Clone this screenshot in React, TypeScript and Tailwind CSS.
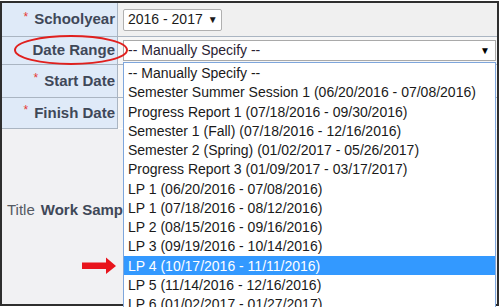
import React from "react";

const options = [
  "-- Manually Specify --",
  "Semester Summer Session 1 (06/20/2016 - 07/08/2016)",
  "Progress Report 1 (07/18/2016 - 09/30/2016)",
  "Semester 1 (Fall) (07/18/2016 - 12/16/2016)",
  "Semester 2 (Spring) (01/02/2017 - 05/26/2017)",
  "Progress Report 3 (01/09/2017 - 03/17/2017)",
  "LP 1 (06/20/2016 - 07/08/2016)",
  "LP 1 (07/18/2016 - 08/12/2016)",
  "LP 2 (08/15/2016 - 09/16/2016)",
  "LP 3 (09/19/2016 - 10/14/2016)",
  "LP 4 (10/17/2016 - 11/11/2016)",
  "LP 5 (11/14/2016 - 12/16/2016)",
  "LP 6 (01/02/2017 - 01/27/2017)",
];

const Label = ({ text, required, h }: { text: string; required?: boolean; h: string }) => (
  <div className={`${h} flex items-center justify-end pr-[2px] bg-[#dfeaf8] border-r border-b border-[#aab5c2] text-[15px] font-bold text-[#3f4858]`}>
    {required && <span className="text-[#e53935] text-[12px] font-normal mr-[6px] -mt-[6px]">*</span>}
    {text}
  </div>
);

const App = () => {
  return (
    <div className="relative w-[500px] h-[307px] bg-white overflow-hidden font-['Liberation_Sans',Arial,sans-serif]">
      <div className="mt-[1px] w-[499px] h-[305px] border-2 border-[#2e2e2e] bg-[#f1f1f3] flex flex-col">
        <div className="grid grid-cols-[116px_1fr]">
          <Label text="Schoolyear" required h="h-[34px]" />
          <div className="h-[34px] bg-[#f0f0f0] border-b border-[#aab5c2] flex items-center pl-[5px]">
            <div className="w-[99px] h-[22px] bg-white border border-[#b0b0b0] rounded-[2px] flex items-center pl-[4px] text-[14px] text-[#1a1a1a]">
              2016 - 2017
              <span className="text-[10px] ml-[5px]">▼</span>
            </div>
          </div>

          <Label text="Date Range" h="h-[28px]" />
          <div className="h-[28px] bg-[#f6f6f6] border-b border-[#aab5c2] flex items-center pl-[5px]">
            <div className="w-[373px] h-[21px] bg-white border border-[#a9a9a9] flex items-center justify-between pl-[4px] pr-[5px] text-[14px] text-[#2a2233]">
              -- Manually Specify --
              <span className="text-[10px] text-black">▼</span>
            </div>
          </div>

          <Label text="Start Date" required h="h-[33px]" />
          <div className="h-[33px] bg-[#f6f6f6] border-b border-[#aab5c2]" />

          <Label text="Finish Date" required h="h-[31px]" />
          <div className="h-[31px] bg-[#f6f6f6] border-b border-white" />
        </div>

        <div className="flex-1 flex items-center pl-[5px] pb-[12px] text-[15px] text-[#555a63]">
          <span>Title</span>
          <span className="ml-[6px] font-bold text-[#3f4858]">Work Sample</span>
        </div>
      </div>

      {/* open dropdown list */}
      <div className="absolute left-[123px] top-[62px] w-[373px] h-[260px] bg-white border border-[#7ea6dc] pt-[0.5px]">
        {options.map((opt, i) => (
          <div
            key={i}
            className={`h-[19.25px] flex items-center pl-[4px] text-[14px] leading-none whitespace-nowrap ${
              i === 10 ? "bg-[#3399ff] text-white" : "text-[#1a1a1a]"
            }`}
          >
            {opt}
          </div>
        ))}
      </div>

      {/* red annotation ellipse */}
      <svg className="absolute left-[12px] top-[33px]" width="120" height="36" viewBox="0 0 120 36">
        <ellipse cx="59" cy="17" rx="56" ry="14" fill="none" stroke="#e0201e" strokeWidth="2" />
      </svg>

      {/* red arrow */}
      <svg className="absolute left-[82px] top-[257px]" width="36" height="18" viewBox="0 0 36 18">
        <polygon points="0,5.5 24,5.5 24,0.5 34,9 24,17 24,12 0,12" fill="#e8141c" />
      </svg>
    </div>
  );
};

export default App;
